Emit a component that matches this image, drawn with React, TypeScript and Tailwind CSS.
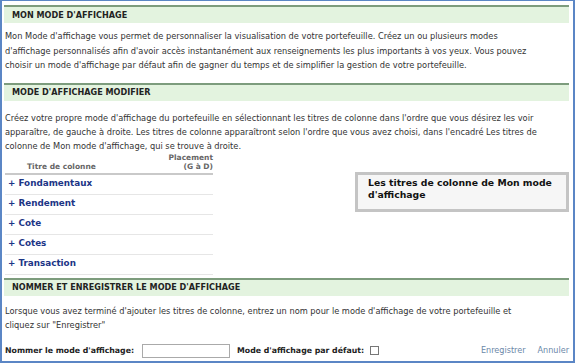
const rows = ["Fondamentaux", "Rendement", "Cote", "Cotes", "Transaction"];

function SectionHeader({ title }: { title: string }) {
  return (
    <div className="h-[18px] border-t-2 border-[#7d9c7d] bg-[#e3f3df] pl-[8px] flex items-center">
      <span className="text-[8.1px] font-bold text-[#222]">{title}</span>
    </div>
  );
}

export default function App() {
  return (
    <div className="w-[575px] h-[363px] bg-white border-x-2 border-b-2 border-t border-[#5b86c5] pl-[2px] pr-[4px] pt-[4px] overflow-hidden font-['DejaVu_Sans',sans-serif] text-[#333]">
      <SectionHeader title="MON MODE D'AFFICHAGE" />
      <p className="text-[8.25px] leading-[14.5px] pl-[1px] pt-[6px] pb-[10px]">
        Mon Mode d'affichage vous permet de personnaliser la visualisation de votre portefeuille. Créez un ou plusieurs modes
        <br />
        d'affichage personnalisés afin d'avoir accès instantanément aux renseignements les plus importants à vos yeux. Vous pouvez
        <br />
        choisir un mode d'affichage par défaut afin de gagner du temps et de simplifier la gestion de votre portefeuille.
      </p>

      <SectionHeader title="MODE D'AFFICHAGE MODIFIER" />
      <p className="text-[8.25px] leading-[14px] pl-[1px] pt-[10px]">
        Créez votre propre mode d'affichage du portefeuille en sélectionnant les titres de colonne dans l'ordre que vous désirez les voir
        <br />
        apparaître, de gauche à droite. Les titres de colonne apparaîtront selon l'ordre que vous avez choisi, dans l'encadré Les titres de
        <br />
        colonne de Mon mode d'affichage, qui se trouve à droite.
      </p>

      <div className="flex">
        <div className="w-[208px] ml-[1px]">
          <div className="flex items-end justify-between border-b-2 border-[#c9c9c9] pb-[2px] text-[7.5px] font-bold text-[#666] leading-[9px]">
            <span className="pl-[22px]">Titre de colonne</span>
            <span className="text-right">
              Placement
              <br />
              (G à D)
            </span>
          </div>
          {rows.map((r) => (
            <div key={r} className="h-[20px] flex items-center border-b border-[#e6e6e6] pl-[3px] text-[8.8px] font-bold text-[#1c3586]">
              + {r}
            </div>
          ))}
        </div>
        <div className="flex-1 flex justify-end items-start pt-[19px]">
          <div className="w-[214px] h-[40px] border-[3px] border-[#c4c4c4] bg-[#f6f6f6] px-[10px] pt-[2px] text-[9.3px] leading-[12px] font-bold text-[#111]">
            Les titres de colonne de Mon mode
            <br />
            d'affichage
          </div>
        </div>
      </div>

      <div className="mt-[3px]">
        <SectionHeader title="NOMMER ET ENREGISTRER LE MODE D'AFFICHAGE" />
      </div>
      <p className="text-[8.25px] leading-[14px] pl-[1px] pt-[8px]">
        Lorsque vous avez terminé d'ajouter les titres de colonne, entrez un nom pour le mode d'affichage de votre portefeuille et
        <br />
        cliquez sur "Enregistrer"
      </p>

      <div className="flex items-center mt-[12px] pl-[1px] text-[8.1px]">
        <span className="font-bold text-[#222] text-[7.8px]">Nommer le mode d'affichage:</span>
        <input className="ml-[8px] w-[88px] h-[14px] border border-[#aaa] bg-white" />
        <span className="ml-[7px] font-bold text-[#222] text-[7.8px]">Mode d'affichage par défaut:</span>
        <span className="ml-[6px] w-[9px] h-[9px] border border-[#777] bg-white"></span>
        <span className="ml-auto text-[#6b87a8]">Enregistrer</span>
        <span className="ml-[12px] text-[#6b87a8]">Annuler</span>
      </div>
    </div>
  );
}
